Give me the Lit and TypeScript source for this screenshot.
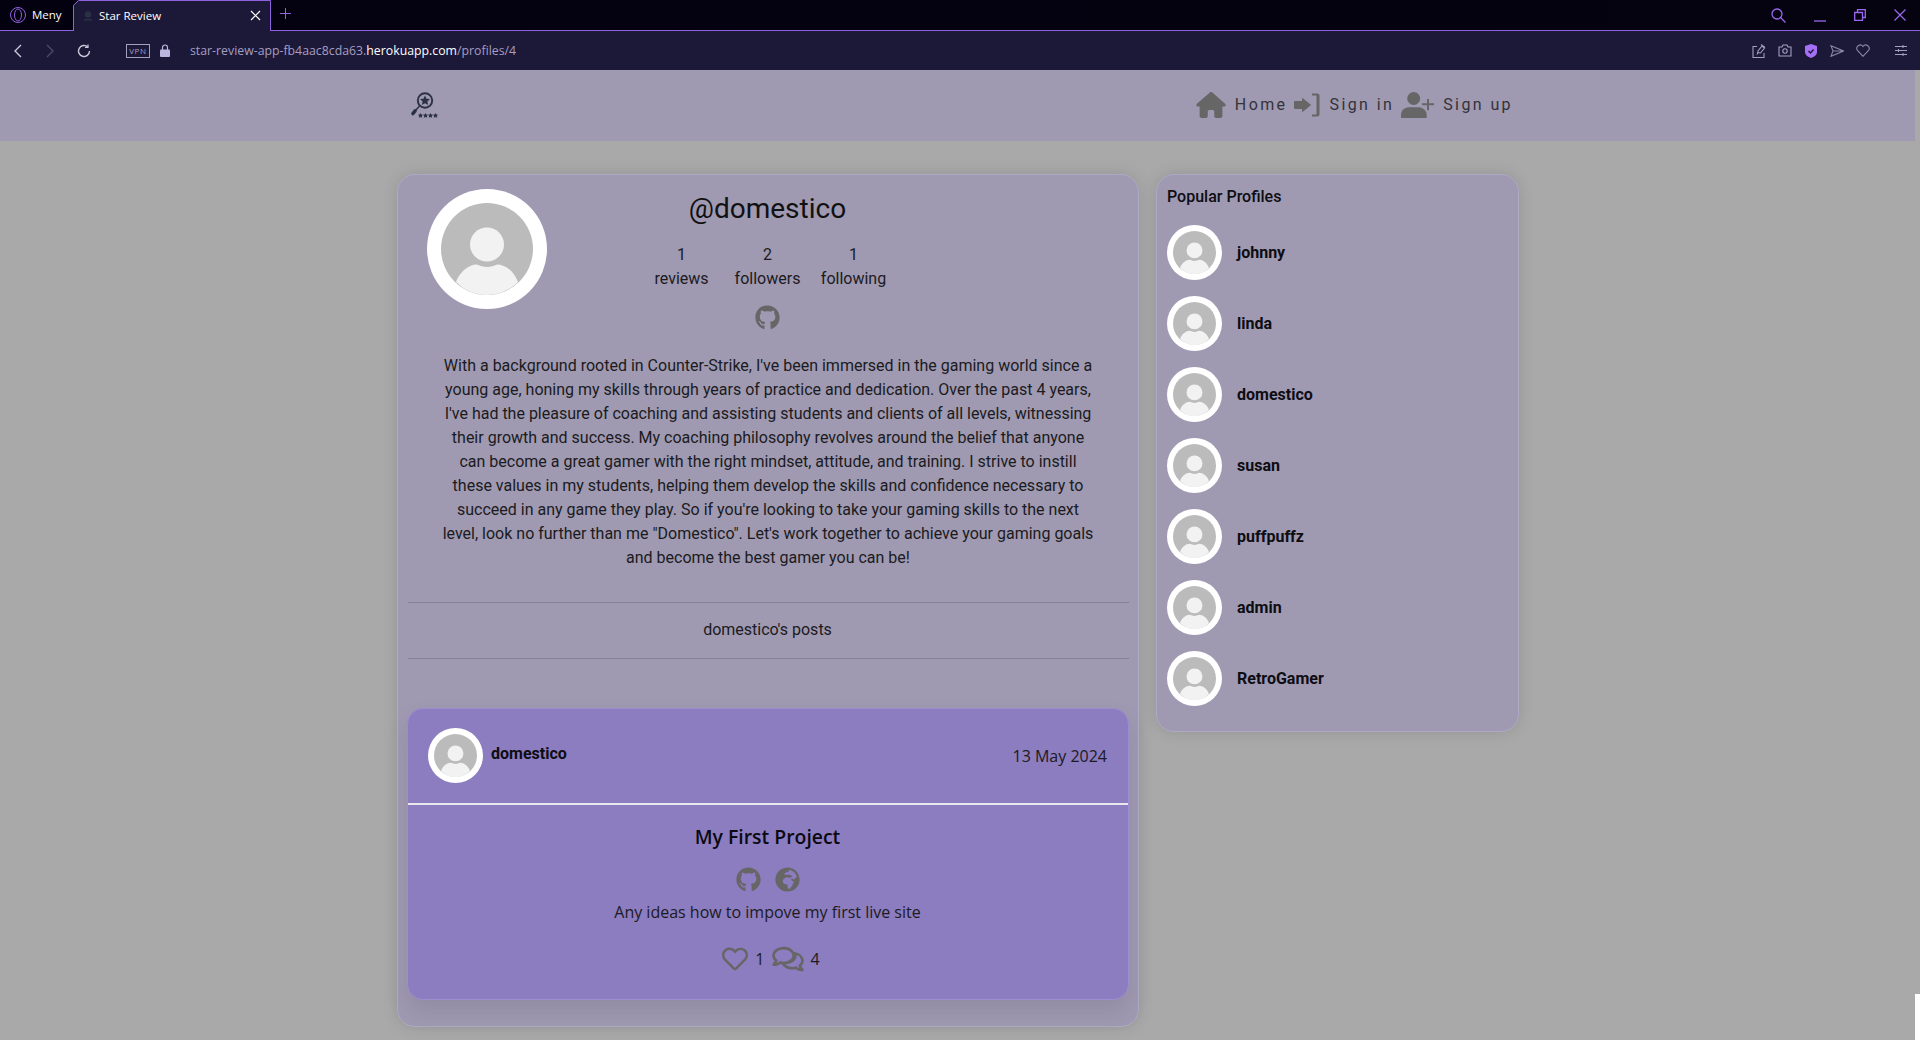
import { LitElement, css, html, svg } from "lit";
import { customElement } from "lit/decorators.js";

const GITHUB =
  "M165.9 397.4c0 2-2.3 3.6-5.2 3.6-3.3 0-5.6-1.6-5.6-3.6 0-2 2.3-3.6 5.2-3.6 3-.3 5.6 1.3 5.6 3.6zm-31.1-4.5c-.7 2 1.3 4.3 4.3 4.9 2.6 1 5.6 0 6.2-2s-1.3-4.3-4.3-5c-2.6-.7-5.5.3-6.2 2.1zm44.2-1.7c-2.9.7-4.9 2.6-4.6 4.9.3 2 2.9 3.3 5.9 2.6 2.9-.7 4.9-2.6 4.6-4.6-.3-1.9-3-3.2-5.9-2.9zM244.8 8C106.1 8 0 113.3 0 252c0 110.9 69.8 205.8 169.5 239.2 12.8 2.3 17.3-5.6 17.3-12.1 0-6.2-.3-40.4-.3-61.4 0 0-70 15-84.7-29.8 0 0-11.4-29.1-27.8-36.6 0 0-22.9-15.7 1.6-16 0 0 24.9 2 38.6 25.8 21.9 38.6 58.6 27.5 72.9 20.9 2.3-16 8.8-27.1 16-33.7-55.9-6.2-112.3-14.3-112.3-110.5 0-27.5 7.6-41.3 23.6-58.9-2.6-6.5-11.1-33.3 2.6-67.9 20.9-6.5 69 27 69 27 20-5.6 41.5-8.5 62.8-8.5s42.8 2.9 62.8 8.5c0 0 48.1-33.6 69-27 13.7 34.7 5.2 61.4 2.6 67.9 16 17.7 25.8 31.5 25.8 58.9 0 96.5-58.9 104.2-114.8 110.5 9.2 7.9 17 22.9 17 46.4 0 33.7-.3 75.4-.3 83.6 0 6.5 4.6 14.4 17.3 12.1C428.2 457.8 496 362.9 496 252 496 113.3 383.5 8 244.8 8z";
const HOME =
  "M575.8 255.5c0 18-15 32.1-32 32.1h-32l.7 160.2c0 2.7-.2 5.4-.5 8.1V472c0 22.1-17.9 40-40 40H456c-1.1 0-2.2 0-3.3-.1c-1.4 .1-2.8 .1-4.2 .1H416 392c-22.1 0-40-17.9-40-40V448 384c0-17.7-14.3-32-32-32H256c-17.7 0-32 14.3-32 32v64 24c0 22.1-17.9 40-40 40H160 128.1c-1.5 0-3-.1-4.5-.2c-1.2 .1-2.4 .2-3.6 .2H104c-22.1 0-40-17.9-40-40V360c0-.9 0-1.9 .1-2.8V287.6H32c-18 0-32-14-32-32.1c0-9 3-17 10-24L266.4 8c7-7 15-8 22-8s15 2 21 7L564.8 231.5c8 7 12 15 11 24z";
const GLOBE =
  "M248 8C111.03 8 0 119.03 0 256s111.03 248 248 248 248-111.03 248-248S384.97 8 248 8zm160 215.5v6.93c0 5.87-3.32 11.24-8.57 13.86l-15.39 7.7a15.485 15.485 0 0 1-15.53-.97l-18.21-12.14a15.52 15.52 0 0 0-13.5-1.81l-2.65.88c-9.7 3.23-13.66 14.79-7.99 23.3l13.24 19.86c2.87 4.31 7.71 6.9 12.89 6.9h8.21c8.56 0 15.5 6.94 15.5 15.5v11.34c0 3.35-1.09 6.62-3.1 9.3l-18.74 24.98c-1.42 1.9-2.39 4.1-2.83 6.43l-4.3 22.83c-.62 3.29-2.29 6.29-4.76 8.56a159.608 159.608 0 0 0-25 29.16l-13.03 19.55a27.756 27.756 0 0 1-23.09 12.36c-10.51 0-20.12-5.94-24.82-15.34a78.902 78.902 0 0 1-8.33-35.29V367.5c0-8.56-6.94-15.5-15.5-15.5h-25.88c-14.49 0-28.38-5.76-38.63-16a54.659 54.659 0 0 1-16-38.63v-14.06c0-17.19 8.1-33.38 21.85-43.7l27.58-20.69a54.663 54.663 0 0 1 32.78-10.93h.89c8.48 0 16.85 1.97 24.43 5.77l14.72 7.36c3.68 1.84 7.93 2.14 11.83.84l47.31-15.77c6.33-2.11 10.6-8.03 10.6-14.7 0-8.56-6.94-15.5-15.5-15.5h-10.09c-4.11 0-8.05-1.63-10.96-4.54l-6.92-6.92a15.493 15.493 0 0 0-10.96-4.54H199.5c-8.56 0-15.5-6.94-15.5-15.5v-4.4c0-7.11 4.84-13.31 11.74-15.04l14.45-3.61c3.74-.94 7-3.23 9.14-6.44l8.08-12.11c2.87-4.31 7.71-6.9 12.89-6.9h24.21c8.56 0 15.5-6.94 15.5-15.5v-21.7C359.23 71.63 422.86 131.02 441.93 208H423.5c-8.56 0-15.5 6.94-15.5 15.5z";
const HEART =
  "M458.4 64.3C400.6 15.7 311.3 23 256 79.3 200.7 23 111.4 15.6 53.6 64.3-21.6 127.6-10.6 230.8 43 285.5l175.4 178.7c10 10.2 23.4 15.9 37.6 15.9 14.3 0 27.6-5.6 37.6-15.8L469 285.6c53.5-54.7 64.7-157.9-10.6-221.3zm-23.6 187.5L259.4 430.5c-2.4 2.4-4.4 2.4-6.8 0L77.2 251.8c-36.5-37.2-43.9-107.6 7.3-150.7 38.9-32.7 98.9-27.8 136.5 10.5l35 35.7 35-35.7c37.8-38.5 97.8-43.2 136.5-10.6 51.1 43.1 43.5 113.9 7.3 150.8z";
const COMMENTS =
  "M532 386.2c27.5-27.1 44-61.1 44-98.2 0-80-76.5-146.1-176.2-157.9C368.3 72.5 294.3 32 208 32 93.1 32 0 103.6 0 192c0 37 16.5 71 44 98.2-15.3 30.7-37.3 54.5-37.7 54.9-6.3 6.7-8.1 16.5-4.4 25 3.6 8.5 12 14 21.2 14 53.5 0 96.7-20.2 125.2-38.8 9.2 2.1 18.7 3.7 28.4 4.9C208.1 407.6 281.8 448 368 448c20.8 0 40.8-2.4 59.8-6.8C456.3 459.7 499.4 480 553 480c9.2 0 17.5-5.5 21.2-14 3.6-8.5 1.9-18.3-4.4-25-.4-.3-22.5-24.1-37.8-54.8zm-392.8-92.3L122.1 305c-14.1 9.1-28.5 16.3-43.1 21.4 2.7-4.7 5.4-9.7 8-14.8l15.5-31.1L77.7 256C64.2 242.6 48 220.7 48 192c0-60.7 71.6-112 160-112s160 51.3 160 112-71.6 112-160 112c-10.1 0-20.2-.7-30.1-2.1l-38.7-8zM382 400.2c-4.5.5-9 .8-13.5.8-53 0-99.3-18.4-128.2-47.4 115-5.5 207.7-65.6 207.7-161.6 0-3.4-.1-6.8-.4-10.1C495.2 195.500 528 236 528 288c0 28.7-16.2 50.6-29.7 64l-24.8 24.500 15.500 31.100c2.600 5.100 5.300 10.100 8 14.800-14.600-5.100-29-12.300-43.100-21.400l-17.100-11.100-19.900 4.600c-11.300 2.600-23.400 4.600-36.900 5.700z";

const PROFILES = ["johnny", "linda", "domestico", "susan", "puffpuffz", "admin", "RetroGamer"];

const BIO = `With a background rooted in Counter-Strike, I've been immersed in the gaming world since a young age, honing my skills through years of practice and dedication. Over the past 4 years, I've had the pleasure of coaching and assisting students and clients of all levels, witnessing their growth and success. My coaching philosophy revolves around the belief that anyone can become a great gamer with the right mindset, attitude, and training. I strive to instill these values in my students, helping them develop the skills and confidence necessary to succeed in any game they play. So if you're looking to take your gaming skills to the next level, look no further than me "Domestico". Let's work together to achieve your gaming goals and become the best gamer you can be!`;

const avatar = (cls: string) => html`<span class="avatar ${cls}">
  <svg viewBox="0 0 92 92">
    <circle cx="46" cy="46" r="46" fill="#bbbbbb"></circle>
    <circle cx="46" cy="41.5" r="17" fill="#f2f2f2"></circle>
    <path d="M15 79c4-11 13-17.500 21-17.500 3 1.500 6.500 2.500 10 2.500s7-1 10-2.500c8 0 17 6.500 21 17.500-8 8-19 13-31 13s-23-5-31-13z" fill="#f2f2f2"></path>
  </svg>
</span>`;

const githubIcon = html`<svg class="fa" viewBox="0 0 496 512"><path d=${GITHUB}></path></svg>`;
const globeIcon = html`<svg class="fa" viewBox="0 0 496 512"><path d=${GLOBE}></path></svg>`;

const logo = svg`<svg width="30" height="30" viewBox="0 0 30 30">
  <circle cx="15" cy="10.500" r="7.200" fill="none" stroke="#2b3145" stroke-width="1.900"></circle>
  <path d="M15 5.500l1.500 3.200 3.500.4-2.600 2.400.7 3.500-3.100-1.800-3.100 1.800.7-3.500-2.600-2.400 3.500-.4z" fill="#2b3145"></path>
  <path d="M9.500 16l-4 4.500" stroke="#2b3145" stroke-width="1.400"></path>
  <path d="M5 21l-2 2.500" stroke="#2b3145" stroke-width="3.600" stroke-linecap="round"></path>
  <g fill="#2b3145">
    ${[10.5, 15.5, 20.5, 25.5].map(
      (x) => svg`<path d="M${x} 23l.8 1.600 1.800.2-1.300 1.200.4 1.800-1.700-.9-1.700.9.4-1.800-1.300-1.200 1.800-.2z"></path>`,
    )}
  </g>
</svg>`;

@customElement("app-root")
export class AppRoot extends LitElement {
  static styles = css`
    :host {
      display: block;
      position: relative;
      height: 1040px;
      overflow: hidden;
      background: #a9a9a9;
      font-family: Roboto, sans-serif;
      font-size: 16px;
      line-height: 24px;
      color: #1b1b20;
    }
    svg {
      display: block;
    }
    .tabbar {
      height: 31px;
      box-sizing: border-box;
      background: linear-gradient(90deg, #030110, #05030f);
      border-bottom: 1px solid #8f60e0;
      display: flex;
      align-items: flex-start;
      color: #fff;
      font-family: "Open Sans", sans-serif;
      font-size: 11.500px;
    }
    .menu {
      width: 73px;
      height: 30px;
      padding-left: 10px;
      box-sizing: border-box;
      display: flex;
      align-items: center;
      gap: 6px;
      flex: none;
    }
    .tab {
      position: relative;
      width: 198px;
      height: 31px;
      flex: none;
      display: flex;
      align-items: center;
      padding: 0 10px;
      box-sizing: border-box;
      background: #1c1838;
      gap: 6px;
      clip-path: polygon(5px 0, 100% 0, 100% 100%, 0 100%, 0 5px);
    }
    .tab-frame {
      position: absolute;
      inset: 0;
    }
    .tab-title {
      flex: 1;
    }
    .plus {
      margin: 8px 0 0 9px;
    }
    .win {
      margin-left: auto;
      display: flex;
      align-items: center;
      gap: 28px;
      height: 30px;
      padding-right: 14px;
    }
    .addr {
      height: 39px;
      background: #1c1838;
      display: flex;
      align-items: center;
      padding-left: 12px;
      font-family: "Open Sans", sans-serif;
      font-size: 12.300px;
      color: #a49fc0;
    }
    .vpn {
      margin-left: 34px;
      width: 24px;
      height: 14px;
      box-sizing: border-box;
      border: 1px solid #a49fc0;
      font-size: 8px;
      line-height: 12px;
      text-align: center;
      letter-spacing: 0.7px;
    }
    .lock {
      margin-left: 10px;
    }
    .url {
      margin-left: 20px;
    }
    .url b {
      font-weight: 400;
      color: #fff;
    }
    .nav-btns {
      display: flex;
      align-items: center;
      gap: 20px;
    }
    .addr-right {
      margin-left: auto;
      display: flex;
      align-items: center;
      gap: 12px;
      padding-right: 13px;
    }
    .addr-sep {
      width: 1px;
    }
    .navbar {
      height: 71px;
      margin-right: 5px;
      background: #9f99b2;
      display: flex;
      align-items: center;
      padding: 0 0 2px 410px;
      box-sizing: border-box;
    }
    .links {
      margin-left: auto;
      margin-right: 402px;
      display: flex;
      align-items: center;
      gap: 7px;
      font-size: 16px;
      letter-spacing: 2.400px;
      color: #333338;
    }
    .link {
      display: flex;
      align-items: center;
      gap: 9px;
    }
    .links svg {
      fill: #666;
    }
    .arrow {
      stroke: #666;
      stroke-width: 1;
      stroke-linejoin: round;
    }
    .content {
      display: flex;
      align-items: flex-start;
      gap: 17px;
      padding: 33px 0 0 397px;
    }
    .card {
      box-sizing: border-box;
      background: #9f99b2;
      border: 1px solid #aeaac6;
      border-radius: 18px;
      box-shadow: 0 0 16px rgba(0, 0, 0, 0.12);
    }
    .main {
      width: 742px;
      height: 853px;
      padding: 14px 9px 0 10px;
    }
    .head {
      display: grid;
      grid-template-columns: 1fr auto 1fr;
      padding-right: 2px;
    }
    .head .avatar {
      margin-left: 19px;
    }
    .avatar {
      display: block;
      box-sizing: border-box;
      background: #fff;
      border-radius: 50%;
      flex: none;
    }
    .avatar svg {
      width: 100%;
      height: 100%;
    }
    .lg {
      width: 120px;
      height: 120px;
      padding: 14px;
    }
    .sm {
      width: 55px;
      height: 55px;
      padding: 6px;
    }
    .who {
      text-align: center;
      display: flex;
      flex-direction: column;
      align-items: center;
    }
    h1 {
      margin: 0;
      font-size: 28px;
      line-height: 40px;
      font-weight: 400;
      color: #111;
    }
    .stats {
      margin-top: 14px;
      display: grid;
      grid-template-columns: repeat(3, 86px);
    }
    .fa {
      fill: #666;
      width: 25px;
      height: 25px;
    }
    .who .fa {
      margin-top: 14px;
    }
    .bio {
      width: 656px;
      margin: 24px 0 0 32px;
      text-align: center;
    }
    .posts-label {
      margin-top: 32px;
      padding: 15px 2px 16px 0;
      border-top: 1px solid #86819a;
      border-bottom: 1px solid #86819a;
      text-align: center;
    }
    .post {
      margin: 49px 0 0 -1px;
      height: 292px;
      width: 722px;
      box-sizing: border-box;
      background: #8c7cc0;
      border: 1px solid #9a8dd0;
      border-radius: 16px;
      box-shadow: 0 12px 24px rgba(0, 0, 0, 0.09);
      font-family: "Open Sans", sans-serif;
    }
    .post-head {
      height: 96px;
      box-sizing: border-box;
      border-bottom: 2px solid #e9e7ee;
      display: flex;
      align-items: center;
      padding: 0 21px 2px 20px;
      gap: 8px;
    }
    .post-name {
      font-family: Roboto, sans-serif;
      font-weight: 700;
      color: #0d0d12;
      margin-bottom: 2px;
      flex: 1;
    }
    .post-date {
      margin-top: 1px;
    }
    .post-body {
      display: flex;
      flex-direction: column;
      align-items: center;
      padding: 0 2px 0 1px;
    }
    h2 {
      margin: 18px 0 0;
      font-size: 19.400px;
      line-height: 28px;
      font-weight: 600;
      color: #0a0a12;
    }
    .icons {
      margin-top: 16px;
      display: flex;
      gap: 14px;
    }
    .post-text {
      margin-top: 8px;
    }
    .meta {
      margin: 21px 0 0 7px;
      display: flex;
      align-items: center;
      gap: 7px;
    }
    .meta svg {
      fill: #666;
    }
    .side {
      width: 363px;
      height: 558px;
      padding: 10px;
    }
    .side-title {
      font-weight: 500;
      color: #0d0d12;
      margin-bottom: 16px;
    }
    .profile {
      display: flex;
      align-items: center;
      gap: 15px;
      height: 55px;
      margin-bottom: 16px;
      font-weight: 700;
      color: #0d0d12;
    }
    .gutter {
      position: absolute;
      right: 0;
      bottom: 0;
      width: 5px;
      height: 46px;
      background: #fff;
    }
  `;

  render() {
    return html`
      <div class="tabbar">
        <div class="menu">
          <svg width="16" height="16" viewBox="0 0 16 16" fill="none" stroke="#8f60e0">
            <circle cx="8" cy="8" r="7.500"></circle>
            <ellipse cx="8" cy="8" rx="3.500" ry="6"></ellipse>
          </svg>
          <span>Meny</span>
        </div>
        <div class="tab">
          <svg class="tab-frame" width="198" height="31" viewBox="0 0 198 31" fill="none" stroke="#8f60e0">
            <path d="M.5 31V5.500l5-5h192V31"></path>
          </svg>
          <svg width="10" height="10" viewBox="0 0 10 10" fill="#2b3145">
            <circle cx="5" cy="3.500" r="3.200"></circle>
            <path d="M1 8h8v1.500H1z"></path>
          </svg>
          <span class="tab-title">Star Review</span>
          <svg width="11" height="11" viewBox="0 0 11 11" stroke="#fff" stroke-width="1.200">
            <path d="M1 1l9 9M10 1l-9 9"></path>
          </svg>
        </div>
        <svg class="plus" width="11" height="11" viewBox="0 0 11 11" stroke="#8f60e0">
          <path d="M5.500 0v11M0 5.500h11"></path>
        </svg>
        <div class="win">
          <svg width="15" height="15" viewBox="0 0 15 15" fill="none" stroke="#9a68ef" stroke-width="1.300">
            <circle cx="6" cy="6" r="5"></circle>
            <path d="M9.500 9.500l5 5"></path>
          </svg>
          <svg width="12" height="14" viewBox="0 0 12 14" stroke="#9a68ef" stroke-width="1.300">
            <path d="M0 13h12"></path>
          </svg>
          <svg width="12" height="12" viewBox="0 0 12 12" fill="none" stroke="#9a68ef" stroke-width="1.300">
            <path d="M.7 3.500h7.800v7.800H.7zM3.500 3.500V.7h7.800v7.800H8.500"></path>
          </svg>
          <svg width="12" height="12" viewBox="0 0 12 12" stroke="#9a68ef" stroke-width="1.200">
            <path d="M.5.500l11 11M11.500.500l-11 11"></path>
          </svg>
        </div>
      </div>
      <div class="addr">
        <div class="nav-btns">
          <svg width="12" height="14" viewBox="0 0 12 14" fill="none" stroke="#c9c6d8" stroke-width="1.400">
            <path d="M9 1L3 7l6 6"></path>
          </svg>
          <svg width="12" height="14" viewBox="0 0 12 14" fill="none" stroke="#4d4868" stroke-width="1.400">
            <path d="M3 1l6 6-6 6"></path>
          </svg>
          <svg width="16" height="14" viewBox="0 0 14 14" fill="none" stroke="#c9c6d8" stroke-width="1.400">
            <path d="M12.500 7a5.500 5.500 0 1 1-1.700-4"></path>
            <path d="M11 .500v3H8" stroke-width="1.200"></path>
          </svg>
        </div>
        <span class="vpn">VPN</span>
        <svg class="lock" width="10" height="13" viewBox="0 0 10 13">
          <path d="M2.500 6V3.500a2.500 2.500 0 0 1 5 0V6" fill="none" stroke="#bdb6df" stroke-width="1.200"></path>
          <rect y="5.500" width="10" height="7.500" rx="1" fill="#bdb6df"></rect>
        </svg>
        <span class="url">star-review-app-fb4aac8cda63.<b>herokuapp.com</b>/profiles/4</span>
        <div class="addr-right">
          <svg width="14" height="14" viewBox="0 0 14 14" fill="none" stroke="#a49fc0" stroke-width="1.100">
            <path d="M5 2.500H1v11h11V9M6.500 8.500l-1 1 .5-2.500 4-5 2.500 2-4 5zM9 .500l4 3"></path>
          </svg>
          <svg width="14" height="13" viewBox="0 0 14 13" fill="none" stroke="#a49fc0" stroke-width="1.100">
            <path d="M1 3h3l1-2h4l1 2h3v9H1z"></path>
            <circle cx="7" cy="7" r="2.200"></circle>
          </svg>
          <svg width="14" height="14" viewBox="0 0 14 14">
            <path d="M7 0l6 2v6c0 3-3 5-6 6-3-1-6-3-6-6V2z" fill="#a56ff5"></path>
            <path d="M4.500 7l2 2 3-3.500" fill="none" stroke="#1c1838" stroke-width="1.400"></path>
          </svg>
          <svg width="14" height="12" viewBox="0 0 14 12" fill="none" stroke="#8a85a6" stroke-width="1.100">
            <path d="M1 .700L13.500 6 1 11.300 3 6zM3 6h10"></path>
          </svg>
          <svg width="14" height="13" viewBox="0 0 14 13" fill="none" stroke="#8a85a6" stroke-width="1.100">
            <path d="M7 12.300L1.500 6.500a3.300 3.300 0 0 1 5.500-4 3.300 3.300 0 0 1 5.500 4z"></path>
          </svg>
          <span class="addr-sep"></span>
          <svg width="12" height="11" viewBox="0 0 12 11" stroke="#a49fc0">
            <path d="M0 1.500h12M0 5.500h12M0 9.500h12"></path>
            <path d="M8 0v3M3.500 4v3M8 8v3"></path>
          </svg>
        </div>
      </div>
      <div class="navbar">
        ${logo}
        <div class="links">
          <span class="link">
            <svg width="30" height="26" viewBox="0 0 576 512"><path d=${HOME}></path></svg>
            Home
          </span>
          <span class="link">
            <svg width="26" height="24" viewBox="0 0 26 24">
              <path class="arrow" d="M.5 8.500h8V5.500l8 6.500-8 6.500v-3h-8z"></path>
              <path d="M18 .500h5a2.500 2.500 0 0 1 2.500 2.500v18a2.500 2.500 0 0 1-2.500 2.500h-5v-2h4.500v-19H18z"></path>
            </svg>
            Sign in
          </span>
          <span class="link">
            <svg width="33" height="26" viewBox="0 0 33 26">
              <circle cx="12.700" cy="6.500" r="6.500"></circle>
              <path d="M0 26v-3c0-4 3-7.700 8-7.700h10c4 0 7.700 3.700 7.700 7.700v3z"></path>
              <path d="M26 7h2v4.300h5v2h-5v5h-2v-5h-5v-2h5z"></path>
            </svg>
            Sign up
          </span>
        </div>
      </div>
      <div class="content">
        <section class="card main">
          <div class="head">
            ${avatar("lg")}
            <div class="who">
              <h1>@domestico</h1>
              <div class="stats">
                <div>1<br />reviews</div>
                <div>2<br />followers</div>
                <div>1<br />following</div>
              </div>
              ${githubIcon}
            </div>
          </div>
          <div class="bio">${BIO}</div>
          <div class="posts-label">domestico's posts</div>
          <article class="post">
            <div class="post-head">
              ${avatar("sm")}
              <span class="post-name">domestico</span>
              <span class="post-date">13 May 2024</span>
            </div>
            <div class="post-body">
              <h2>My First Project</h2>
              <div class="icons">${githubIcon}${globeIcon}</div>
              <div class="post-text">Any ideas how to impove my first live site</div>
              <div class="meta">
                <svg width="26" height="26" viewBox="0 0 512 512"><path d=${HEART}></path></svg>
                <span>1</span>
                <svg width="32" height="28" viewBox="0 0 576 512"><path d=${COMMENTS}></path></svg>
                <span>4</span>
              </div>
            </div>
          </article>
        </section>
        <aside class="card side">
          <div class="side-title">Popular Profiles</div>
          ${PROFILES.map(
            (name) => html`<div class="profile">${avatar("sm")}<span>${name}</span></div>`,
          )}
        </aside>
      </div>
      <div class="gutter"></div>
    `;
  }
}

declare global {
  interface HTMLElementTagNameMap {
    "app-root": AppRoot;
  }
}
